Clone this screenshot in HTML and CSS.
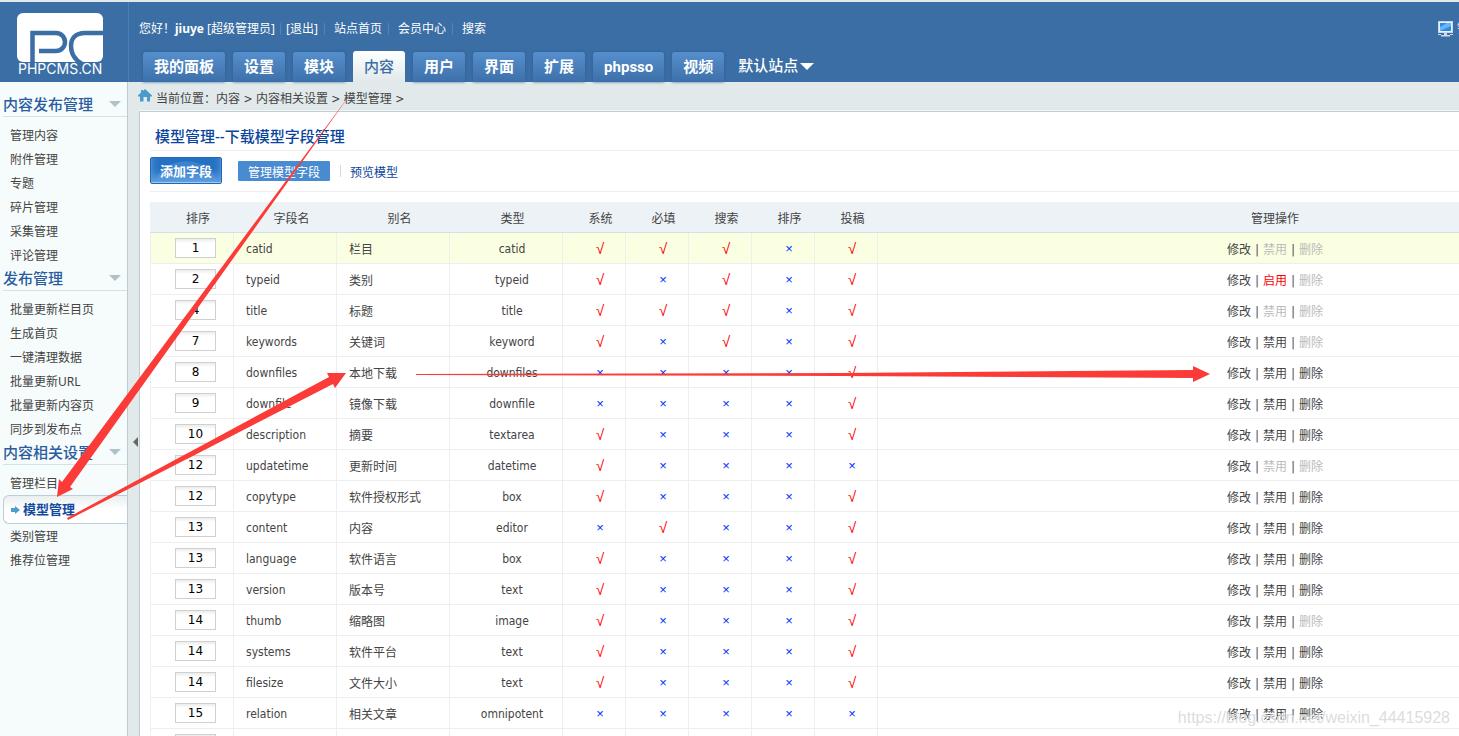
FILE: index.html
```html
<!DOCTYPE html>
<html lang="zh-CN">
<head>
<meta charset="utf-8">
<title>PHPCMS 模型管理</title>
<link rel="stylesheet" href="styles.css">
</head>
<body>
<header class="header">
  <a class="logo" href="#" aria-label="PHPCMS">
    <svg class="logo-mark" viewBox="0 0 86 50" width="86" height="50" aria-hidden="true">
      <rect width="86" height="49" rx="6" fill="#fff"/>
      <path d="M15.500 50V20H39a9 9 0 0 1 0 18H22M86 20H68C58 20 54 26 54 33C54 41 58 47 65 51" fill="none" stroke="#3a6ea5" stroke-width="4.500"/>
    </svg>
    <span class="logo-text">PHPCMS.CN</span>
  </a>
  <div class="header-main">
    <div class="user-bar">
      <span class="greeting">您好！<b>jiuye</b> [超级管理员]</span>
      <a class="exit" href="#">[退出]</a>
      <a href="#">站点首页</a>
      <a href="#">会员中心</a>
      <a href="#">搜索</a>
      <span class="lock">
        <svg viewBox="0 0 15 16" width="15" height="16" aria-hidden="true">
          <rect x=".5" y=".5" width="14" height="11" fill="#e9f2fa" stroke="#c5d7e8"/>
          <rect x="2" y="2" width="11" height="8" fill="#2b8ae8"/>
          <path d="M2 10V6L9 2H13V5Z" fill="#69b5f5"/>
          <path d="M6 12h3v2H6zM3 14h9v1.500H3zM0 13h3v1H0zM12 13h3v1h-3z" fill="#d2dbe2"/>
        </svg>
        <a href="#">锁屏</a>
      </span>
    </div>
    <nav class="tabs">
      <a href="#">我的面板</a>
      <a href="#">设置</a>
      <a href="#">模块</a>
      <a class="current" href="#">内容</a>
      <a href="#">用户</a>
      <a href="#">界面</a>
      <a href="#">扩展</a>
      <a href="#">phpsso</a>
      <a href="#">视频</a>
      <button class="site-picker" type="button">默认站点<svg viewBox="0 0 14 7" width="14" height="7" aria-hidden="true"><path d="M0 0H14L7 7Z" fill="#fff"/></svg></button>
    </nav>
  </div>
</header>

<div class="layout">
  <aside class="sidebar">
    <h3>内容发布管理<i class="caret"></i></h3>
    <ul>
      <li><a href="#">管理内容</a></li>
      <li><a href="#">附件管理</a></li>
      <li><a href="#">专题</a></li>
      <li><a href="#">碎片管理</a></li>
      <li><a href="#">采集管理</a></li>
      <li><a href="#">评论管理</a></li>
    </ul>
    <h3>发布管理<i class="caret"></i></h3>
    <ul>
      <li><a href="#">批量更新栏目页</a></li>
      <li><a href="#">生成首页</a></li>
      <li><a href="#">一键清理数据</a></li>
      <li><a href="#">批量更新URL</a></li>
      <li><a href="#">批量更新内容页</a></li>
      <li><a href="#">同步到发布点</a></li>
    </ul>
    <h3>内容相关设置<i class="caret"></i></h3>
    <ul>
      <li><a href="#">管理栏目</a></li>
      <li class="active"><a href="#"><svg viewBox="0 0 9 8" width="9" height="8" aria-hidden="true"><path d="M0 2H4V0L9 4L4 8V6H0Z" fill="#4a9fd0"/></svg>模型管理</a></li>
      <li><a href="#">类别管理</a></li>
      <li><a href="#">推荐位管理</a></li>
    </ul>
  </aside>
  <div class="splitter"><button type="button" aria-label="收起菜单"></button></div>
  <main class="main">
    <div class="crumbs">
      <svg viewBox="0 0 14 13" width="14" height="13" aria-hidden="true"><path d="M7 0L14 6.500V7.500H12V12.500H9V8H5.500V12.500H2V7.500H0V6.500L3 3.500V1H5V2Z" fill="#4a9bcb"/></svg>
      <span>当前位置：内容 &gt; 内容相关设置 &gt; 模型管理 &gt;</span>
    </div>
    <section class="content">
      <h2>模型管理--下载模型字段管理</h2>
      <div class="toolbar">
        <button class="add" type="button">添加字段</button>
        <a class="pill" href="#">管理模型字段</a>
        <a class="preview" href="#">预览模型</a>
      </div>
      <table class="fields">
        <colgroup>
          <col class="c-sort"><col class="c-name"><col class="c-text"><col class="c-text">
          <col class="c-flag"><col class="c-flag"><col class="c-flag"><col class="c-flag"><col class="c-flag"><col>
        </colgroup>
        <thead>
          <tr><th>排序</th><th>字段名</th><th>别名</th><th>类型</th><th>系统</th><th>必填</th><th>搜索</th><th>排序</th><th>投稿</th><th class="ops">管理操作</th></tr>
        </thead>
        <tbody id="rows"></tbody>
      </table>
    </section>
  </main>
</div>

<svg class="arrows" viewBox="0 0 1220 540" width="1220" height="540" aria-hidden="true">
  <g fill="#fb3b37">
    <path d="M352 92L70 487L73 489L57 497L59 479L62 482Z"/>
    <path d="M67 518L329 377L327 373L346 373L335 388L333 384L68 520Z"/>
    <path d="M416 374L840 373L1193 370V366L1210 374L1193 382V378L840 376L416 375Z"/>
  </g>
</svg>
<div class="watermark">https://blog.csdn.net/weixin_44415928</div>
<script src="fields.js"></script>
</body>
</html>
```

FILE: styles.css
```css
* {
  box-sizing: border-box;
}

body {
  margin: 0;
  height: 100vh;
  overflow: hidden;
  position: relative;
  display: flex;
  flex-direction: column;
  border-top: 2px solid #e4e8ea;
  background: #e1e9eb;
  color: #444;
  font: 12px/24px "Noto Sans", "Noto Sans CJK SC", sans-serif;
}

a {
  color: inherit;
  text-decoration: none;
}

button {
  border: 0;
  padding: 0;
  font-family: inherit;
  cursor: pointer;
}

h2,
h3,
ul {
  margin: 0;
  padding: 0;
  list-style: none;
}

.header {
  display: flex;
  flex: none;
  height: 80px;
  background: #3a6ea5;
  color: #fff;
}

.logo {
  width: 129px;
  flex: none;
  padding: 11px 0 0 17px;
  border-right: 1px solid #4a7fb8;
}

.logo-mark {
  display: block;
}

.logo-text {
  display: block;
  padding-left: 1px;
  font: 14px/12px Inter, sans-serif;
}

.header-main {
  flex: 1;
  min-width: 0;
  display: flex;
  flex-direction: column;
  justify-content: space-between;
  padding: 15px 0 0 10px;
}

.user-bar {
  display: flex;
  white-space: nowrap;
}

.user-bar > a {
  margin-left: 6px;
  padding-left: 10px;
  background: linear-gradient(#4d84c0, #4d84c0) 0 6px / 1px 12px no-repeat;
}

.user-bar > .exit {
  margin-left: 5px;
  padding-left: 6px;
}

.lock {
  display: flex;
  align-items: center;
  gap: 4px;
  width: 21px;
  margin-left: auto;
}

.lock svg {
  flex: none;
}

.tabs {
  display: flex;
  align-items: flex-end;
  gap: 8px;
  padding-left: 4px;
  font-family: Roboto, "Noto Sans CJK SC", sans-serif;
  font-size: 15px;
  font-weight: bold;
  white-space: nowrap;
}

.tabs a {
  padding: 1px 11px 0;
  line-height: 29px;
  border-radius: 3px 3px 0 0;
  background: linear-gradient(#568fcd, #3c70a9);
  box-shadow: 0 0 3px #2e5f96;
}

.tabs .current {
  line-height: 30px;
  background: linear-gradient(#fff, #e1e9eb);
  box-shadow: none;
  color: #3a6ea5;
  font-weight: 500;
}

.site-picker {
  display: flex;
  align-items: center;
  gap: 2px;
  margin-left: 6px;
  background: none;
  color: #fff;
  font-size: 15px;
  font-weight: 500;
  line-height: 32px;
}

.layout {
  flex: 1;
  min-height: 0;
  display: grid;
  grid-template-columns: 128px 10px 1fr;
  grid-template-rows: minmax(0, 1fr);
}

.sidebar {
  padding: 11px 0 0 3px;
  border-right: 1px solid #bccbd4;
  background: #f6fbfc;
  overflow: hidden;
}

.sidebar h3 {
  display: flex;
  align-items: center;
  justify-content: space-between;
  height: 24px;
  padding: 0 6px 2px 0;
  border-bottom: 1px solid #d3e2e9;
  color: #2a5ca0;
  font-size: 15px;
  font-weight: 500;
}

.caret {
  border: 6px solid transparent;
  border-top-color: #b0c2c8;
  border-bottom: 0;
}

.sidebar ul {
  padding-top: 6px;
}

.sidebar li {
  padding: 2px 0 0 7px;
  line-height: 22px;
}

.sidebar .active {
  margin-right: -1px;
  padding-top: 0;
  border: 1px solid #bccfd8;
  border-right: 0;
  border-radius: 6px 0 0 6px;
  background: linear-gradient(#e9eff0, #fff 50%);
  color: #124aa0;
  font-size: 13px;
  font-weight: bold;
  line-height: 27px;
}

.active a {
  display: flex;
  align-items: center;
  gap: 3px;
}

.splitter {
  display: flex;
  align-items: center;
  padding: 66px 0 0 5px;
}

.splitter button {
  border: 5px solid transparent;
  border-right-color: #666;
  border-left: 0;
  background: none;
}

.main {
  min-width: 0;
  display: flex;
  flex-direction: column;
}

.crumbs {
  display: flex;
  align-items: center;
  gap: 4px;
  height: 29px;
  padding-bottom: 1px;
  border-bottom: 1px solid #f3f7f8;
  font-family: "DejaVu Sans Condensed", "Noto Sans CJK SC", sans-serif;
}

.crumbs span {
  padding-top: 6px;
}

.content {
  flex: 1;
  min-height: 0;
  margin-left: 1px;
  padding: 10px 0 0 10px;
  border-top: 1px solid #bfcdd4;
  border-left: 1px solid #bfcdd4;
  background: #fff;
  overflow: hidden;
}

h2 {
  padding: 2px 5px;
  border-bottom: 1px solid #eee;
  color: #0a449c;
  font-size: 15px;
  font-weight: 500;
}

.toolbar {
  display: flex;
  align-items: center;
  height: 41px;
  margin-bottom: 10px;
  padding-bottom: 1px;
  border-bottom: 1px solid #eee;
}

.add {
  width: 72px;
  height: 27px;
  border: 1px solid #1f69bd;
  border-radius: 2px;
  background: radial-gradient(ellipse at 50% 100%, #3b82cf 60%, #2470c2 62%);
  box-shadow: inset 0 -1px 1px #a9cdf0, inset 0 -7px 8px #5f9edf;
  color: #fff;
  font-size: 13px;
  font-weight: bold;
}

.pill {
  margin: 0 10px 0 16px;
  padding: 3px 10px 0;
  border-radius: 1px;
  background: #488bd1;
  color: #fff;
  line-height: 17px;
}

.preview {
  padding: 4px 0 0 10px;
  background: linear-gradient(#d5dbe5, #d5dbe5) 0 8px / 1px 12px no-repeat;
  color: #0a449c;
}

.fields {
  width: 100%;
  table-layout: fixed;
  border-collapse: separate;
  border-spacing: 0;
  font-family: "DejaVu Sans Condensed", "Noto Sans CJK SC", sans-serif;
}

.c-sort { width: 84px; }
.c-name { width: 103px; }
.c-text { width: 113px; }
.c-flag { width: 63px; }

.fields th,
.fields td {
  height: 31px;
  padding: 2px 0 0 12px;
  border-bottom: 1px solid #eee;
  line-height: 24px;
  text-align: center;
  white-space: nowrap;
}

.fields th {
  padding-top: 4px;
  border-bottom-color: #d5dfe8;
  background: #edf2f6;
  font-weight: normal;
}

.fields td {
  border-right: 1px solid #eee;
}

.fields td:first-child {
  padding-top: 0;
  border-left: 1px solid #eee;
}

.fields td:nth-child(2),
.fields td:nth-child(3) {
  text-align: left;
}

.fields td:nth-child(3),
.fields td.ops {
  padding-top: 4px;
}

.fields tbody tr:first-child {
  background: #fbffe2;
}

.fields .ops {
  padding-left: 213px;
  border-right: 0;
}

.fields input {
  display: block;
  width: 41px;
  height: 20px;
  margin-left: 12px;
  padding: 0 0 1px;
  border: 1px solid #d0d0d0;
  background: linear-gradient(#ececec, #fff 4px);
  color: #000;
  font: 12px "DejaVu Sans", sans-serif;
  text-align: center;
}

.fields .yes {
  color: #f00;
  font-family: "Liberation Sans", sans-serif;
  font-size: 15px;
}

.fields .no {
  color: #03f;
  font-family: "Liberation Sans", sans-serif;
  font-size: 13px;
}

.off { color: #bbb; }
.enable { color: #f00; }

.bar {
  display: inline-block;
  width: 12px;
}

.arrows {
  position: absolute;
  top: -2px;
  left: 0;
  pointer-events: none;
}

.watermark {
  position: absolute;
  right: 9px;
  bottom: 7px;
  color: rgba(205, 205, 205, 0.7);
  font: 16px/22px "Liberation Sans", sans-serif;
  text-shadow: 1px 1px 1px #fff;
  pointer-events: none;
}
```

FILE: fields.js
```js
// sort, field name, alias, type, flags (system/required/search/order/post),
// state of the disable link, state of the delete link
const fields = [
  [1, "catid", "栏目", "catid", "11101", "off", "off"],
  [2, "typeid", "类别", "typeid", "10101", "enable", "off"],
  [4, "title", "标题", "title", "11101", "off", "off"],
  [7, "keywords", "关键词", "keyword", "10101", "", "off"],
  [8, "downfiles", "本地下载", "downfiles", "00001", "", ""],
  [9, "downfile", "镜像下载", "downfile", "00001", "", ""],
  [10, "description", "摘要", "textarea", "10001", "", ""],
  [12, "updatetime", "更新时间", "datetime", "10000", "off", "off"],
  [12, "copytype", "软件授权形式", "box", "10001", "", ""],
  [13, "content", "内容", "editor", "01001", "", ""],
  [13, "language", "软件语言", "box", "10001", "", ""],
  [13, "version", "版本号", "text", "10001", "", ""],
  [14, "thumb", "缩略图", "image", "10001", "", "off"],
  [14, "systems", "软件平台", "text", "10001", "", ""],
  [14, "filesize", "文件大小", "text", "10001", "", ""],
  [15, "relation", "相关文章", "omnipotent", "00000", "", ""],
  [16, "template", "内容页模板", "template", "00000", "", ""]
];

function action(label, state) {
  return state === "off"
    ? `<span class="off">${label}</span>`
    : `<a class="${state}" href="#">${label}</a>`;
}

document.getElementById("rows").innerHTML = fields.map(
  ([sort, name, alias, type, flags, disable, remove]) => `<tr>
    <td><input type="text" value="${sort}" aria-label="${alias} 排序"></td>
    <td>${name}</td><td>${alias}</td><td>${type}</td>
    ${[...flags].map(f => f === "1" ? '<td class="yes">√</td>' : '<td class="no">×</td>').join("")}
    <td class="ops"><a href="#">修改</a><span class="bar">|</span>${action(disable === "enable" ? "启用" : "禁用", disable)}<span class="bar">|</span>${action("删除", remove)}</td>
  </tr>`
).join("");
```
